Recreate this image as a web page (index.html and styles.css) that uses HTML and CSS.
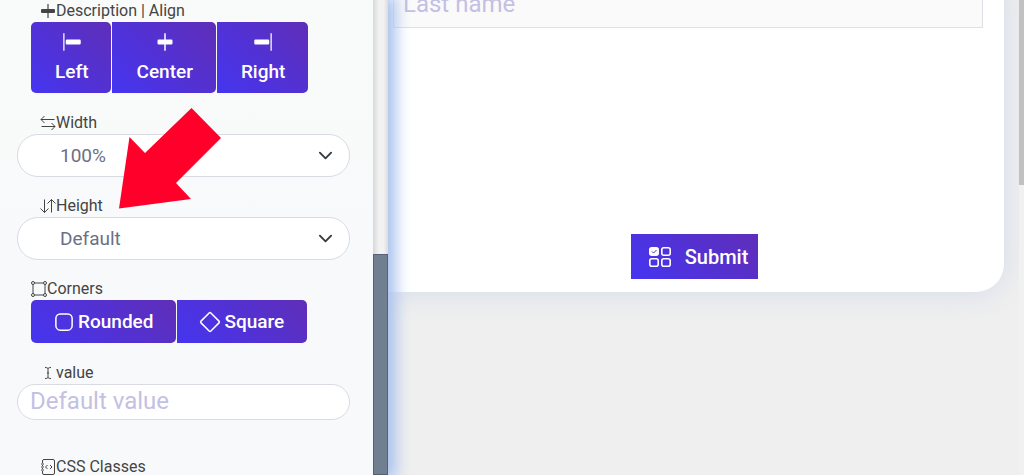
FILE: index.html
```html
<!DOCTYPE html>
<html lang="en">
<head>
    <meta charset="UTF-8">
    <meta name="viewport" content="width=device-width, initial-scale=1.0">
    <title>Form Builder</title>
    <link rel="stylesheet" href="styles.css">
</head>
<body>
    <aside class="sidebar">
        <div class="settings">
            <div class="setting">
                <div class="setting-label" id="alignLabel">
                    <svg class="icon" viewBox="0 0 16 16"><path d="M7.400 1h1.200v14H7.400zM1 7a1 1 0 0 1 1-1h12a1 1 0 0 1 1 1v2a1 1 0 0 1-1 1H2a1 1 0 0 1-1-1V7z"/></svg>
                    <span>Description | Align</span>
                </div>
                <div class="btn-group stacked" role="group" aria-labelledby="alignLabel">
                    <button type="button" class="btn">
                        <svg class="icon" viewBox="0 0 16 16"><path d="M1 1h1v14H1zM3 7a1 1 0 0 1 1-1h10a1 1 0 0 1 1 1v2a1 1 0 0 1-1 1H4a1 1 0 0 1-1-1V7z"/></svg>
                        <span>Left</span>
                    </button>
                    <button type="button" class="btn">
                        <svg class="icon" viewBox="0 0 16 16"><path d="M7.400 1h1.200v14H7.400zM2 7a1 1 0 0 1 1-1h10a1 1 0 0 1 1 1v2a1 1 0 0 1-1 1H3a1 1 0 0 1-1-1V7z"/></svg>
                        <span>Center</span>
                    </button>
                    <button type="button" class="btn">
                        <svg class="icon" viewBox="0 0 16 16"><path d="M14 1h1v14h-1zM13 7a1 1 0 0 0-1-1H2a1 1 0 0 0-1 1v2a1 1 0 0 0 1 1h10a1 1 0 0 0 1-1V7z"/></svg>
                        <span>Right</span>
                    </button>
                </div>
            </div>

            <div class="setting">
                <label class="setting-label" for="width">
                    <svg class="icon line" viewBox="0 0 16 16"><path d="M4.500 1L1 4.500H14.500M11.500 15L15 11.500H1.500M4.500 8L1 4.500M11.500 8L15 11.500"/></svg>
                    <span>Width</span>
                </label>
                <select id="width" class="field">
                    <option>100%</option>
                    <option>75%</option>
                    <option>50%</option>
                </select>
            </div>

            <div class="setting">
                <label class="setting-label" for="height">
                    <svg class="icon line" viewBox="0 0 16 16"><path d="M4.500 1.500V14.500M.5 10.500L4.500 14.500L8.500 10.500M11.500 14.500V1.500M7.500 5.500L11.500 1.500L15.500 5.500"/></svg>
                    <span>Height</span>
                </label>
                <select id="height" class="field">
                    <option>Default</option>
                    <option>Small</option>
                    <option>Large</option>
                </select>
            </div>

            <div class="setting">
                <div class="setting-label outer" id="cornersLabel">
                    <svg class="icon line" viewBox="0 0 16 16"><circle cx="2" cy="2" r="1.500"/><circle cx="14" cy="2" r="1.500"/><circle cx="2" cy="14" r="1.500"/><circle cx="14" cy="14" r="1.500"/><path d="M3.500 2h9M3.500 14h9M2 3.500v9M14 3.500v9"/></svg>
                    <span>Corners</span>
                </div>
                <div class="btn-group" role="group" aria-labelledby="cornersLabel">
                    <button type="button" class="btn">
                        <svg class="icon line" viewBox="0 0 16 16"><rect x="1.500" y="1.500" width="13" height="13" rx="3.500"/></svg>
                        <span>Rounded</span>
                    </button>
                    <button type="button" class="btn">
                        <svg class="icon line" viewBox="0 0 16 16"><path d="M7.300.8a1 1 0 0 1 1.400 0l6.500 6.500a1 1 0 0 1 0 1.400l-6.500 6.500a1 1 0 0 1-1.400 0L.8 8.700a1 1 0 0 1 0-1.400z"/></svg>
                        <span>Square</span>
                    </button>
                </div>
            </div>

            <div class="setting">
                <label class="setting-label" for="value">
                    <svg class="icon line" viewBox="0 0 16 16"><path d="M5 2.500c2 0 3 .5 3 1.500 0-1 1-1.500 3-1.500M8 4v8M5 13.500c2 0 3-.5 3-1.500 0 1 1 1.500 3 1.500M7 8h2"/></svg>
                    <span>value</span>
                </label>
                <input type="text" id="value" class="field" placeholder="Default value">
            </div>

            <div class="setting advanced">
                <label class="setting-label" for="cssClasses">
                    <svg class="icon line" viewBox="0 0 16 16"><path d="M2.500 4V2a1.500 1.500 0 0 1 1.500-1.500h9A1.500 1.500 0 0 1 14.500 2v12a1.500 1.500 0 0 1-1.500 1.500H4A1.500 1.500 0 0 1 2.500 14v-2M2.500 6v1M2.500 9v1M1 5h3M1 8h3M1 11h3M7.500 6L5.500 8l2 2M10 6l2 2-2 2"/></svg>
                    <span>CSS Classes</span>
                </label>
                <input type="text" id="cssClasses" class="field">
            </div>
        </div>
        <div class="sidebar-track"><div class="sidebar-thumb"></div></div>
        <svg class="pointer" viewBox="0 0 102 101"><path d="M0 100.500L10.500 29 26 45 72.500 0 102 30 57 75 72 91z"/></svg>
    </aside>

    <main class="preview">
        <form class="form-card">
            <input type="text" class="form-input" placeholder="Last name" aria-label="Last name">
            <button type="button" class="submit">
                <svg class="icon line" viewBox="0 0 22 20"><rect class="checked" x=".8" y=".8" width="8.400" height="7.400" rx="2"/><rect x="12.800" y=".8" width="8.400" height="7.400" rx="2"/><rect x=".8" y="11.800" width="8.400" height="7.400" rx="2"/><rect x="12.800" y="11.800" width="8.400" height="7.400" rx="2"/><path class="tick" d="M3 4.500l1.500 1.500L7.500 3"/></svg>
                <span>Submit</span>
            </button>
        </form>
    </main>
    <div class="page-track"><div class="page-thumb"></div></div>
</body>
</html>
```
FILE: styles.css
```css
:root {
    --btn-start: #4535f0;
    --btn-end: #5f2eb8;
    --label-color: #444;
    --placeholder: #c4bfe3;
    --field-border: #d8dbe2;
}

* {
    box-sizing: border-box;
}

body {
    margin: 0;
    display: flex;
    height: 100vh;
    overflow: hidden;
    font-family: Roboto, "Liberation Sans", sans-serif;
    background-color: #efefef;
}

input, select, button {
    font-family: inherit;
}

.icon {
    width: 1em;
    height: 1em;
    flex: none;
    fill: currentColor;
}

.icon.line {
    fill: none;
    stroke: currentColor;
}

/* Sidebar */
.sidebar {
    position: relative;
    z-index: 1;
    display: flex;
    flex: 0 0 388px;
    background: linear-gradient(#f9fbfa, #f8f9fb 60%);
    box-shadow: 4px 0 14px 4px #a9c2ee;
}

.settings {
    flex: 1;
    display: flex;
    flex-direction: column;
    gap: 19px;
    padding: 0 23px 0 17px;
    overflow: hidden;
}

.setting-label {
    display: flex;
    align-items: center;
    height: 22px;
    padding-left: 23px;
    font-size: 16px;
    line-height: 20px;
    color: var(--label-color);
}

.setting-label.outer {
    padding-left: 14px;
}

.advanced {
    margin-top: 17px;
}

.field {
    display: block;
    width: 100%;
    border: 1px solid var(--field-border);
    border-radius: 21px;
    background-color: #fff;
}

select.field {
    appearance: none;
    height: 43px;
    margin-bottom: -1px;
    padding: 0 42px;
    font-size: 19px;
    color: #6b7085;
    background: #fff url("data:image/svg+xml,%3Csvg xmlns='http://www.w3.org/2000/svg' viewBox='0 0 16 16' fill='none' stroke='%23343a40' stroke-width='2' stroke-linecap='round' stroke-linejoin='round'%3E%3Cpath d='M2 5l6 6 6-6'/%3E%3C/svg%3E") no-repeat right 16px center / 15px;
}

input.field {
    height: 36px;
    padding: 0 12px 3px;
    font-size: 24px;
}

::placeholder {
    color: var(--placeholder);
    opacity: 1;
}

.btn-group {
    display: flex;
    gap: 1px;
    padding-left: 14px;
}

.btn, .submit {
    display: flex;
    align-items: center;
    justify-content: center;
    border: 0;
    font-weight: 500;
    color: #fff;
    background: linear-gradient(45deg, var(--btn-start), var(--btn-end));
    cursor: pointer;
}

.btn {
    gap: 4px;
    height: 43px;
    padding: 0 23px;
    border-radius: 5px;
    font-size: 19px;
}

.btn .icon {
    width: 20px;
    height: 20px;
}

.btn .line {
    stroke-width: 1.2;
    overflow: visible;
}

.btn + .btn {
    border-top-left-radius: 0;
    border-bottom-left-radius: 0;
}

.stacked .btn {
    flex-direction: column;
    gap: 8px;
    height: 71px;
    padding: 0 23px 0 24px;
}

.sidebar-track {
    display: flex;
    flex: 0 0 15px;
    background: linear-gradient(to right, #d8d8d8, #f2f2f2 40%, #f2f2f2 70%, #dcdcdc);
}

.sidebar-thumb {
    flex: 1;
    margin-top: 254px;
    border: 1px solid #566174;
    background-color: #708090;
}

/* Red arrow that lies over the settings */
.pointer {
    position: absolute;
    left: 119px;
    top: 108px;
    width: 102px;
    fill: #ff002b;
}

/* Form preview */
.preview {
    flex: 1;
    padding-right: 15px;
}

.form-card {
    display: flex;
    flex-direction: column;
    align-items: center;
    margin-top: -21px;
    padding: 0 21px 13px 5px;
    border-radius: 0 0 28px 0;
    background-color: #fff;
    box-shadow: 0 0 30px #d3daea;
}

.form-input {
    width: 100%;
    height: 49px;
    padding: 0 9px;
    border: 1px solid #dfe0e6;
    font-size: 24px;
    background-color: #fafafa;
}

.submit {
    gap: 14px;
    height: 45px;
    margin: 206px 0 0 13px;
    padding: 0 10px 0 18px;
    font-size: 20px;
}

.submit .icon {
    width: 22px;
    height: 20px;
    stroke-width: 1.6;
}

.submit .checked {
    fill: #fff;
}

.submit .tick {
    stroke: #4f32d8;
    stroke-width: 1;
}

.page-track {
    flex: 0 0 5px;
    background-color: #f1f1f1;
}

.page-thumb {
    height: 185px;
    background-color: #c1c1c1;
}
```
